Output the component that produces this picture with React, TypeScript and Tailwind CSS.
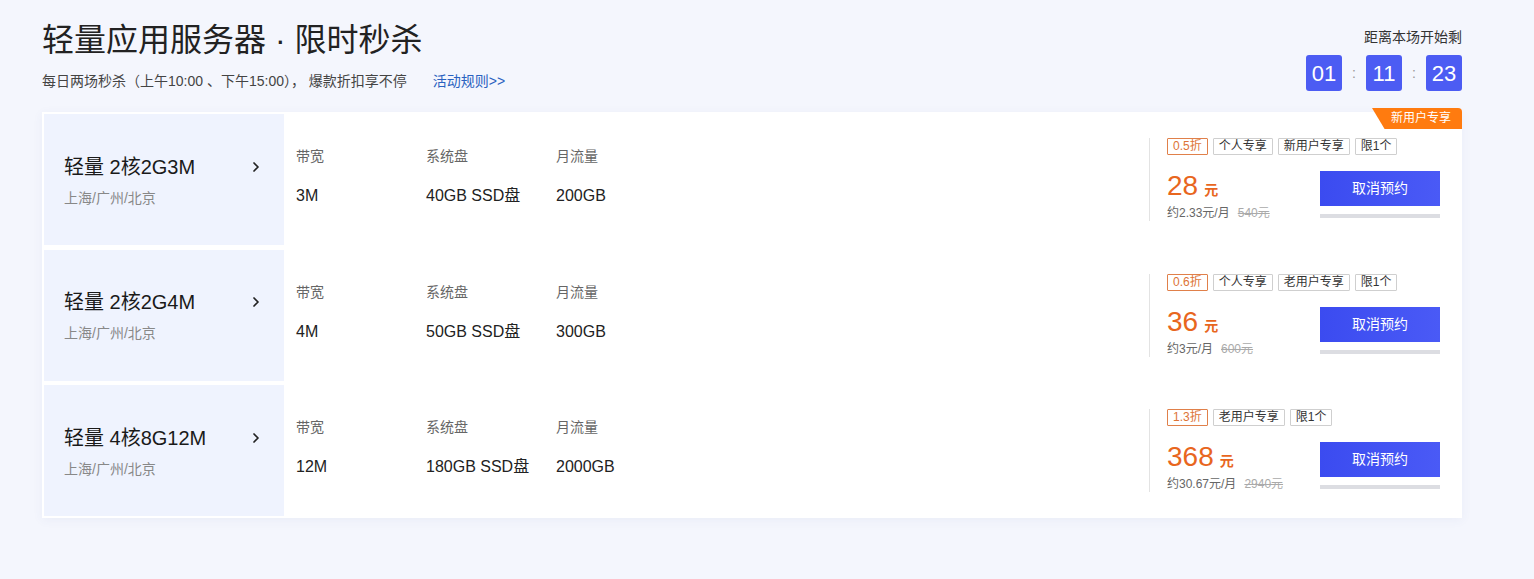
import React from 'react';
import { ChevronRight } from 'lucide-react';

type Plan = {
  name: string;
  bandwidth: string;
  disk: string;
  traffic: string;
  discount: string;
  tags: string[];
  price: string;
  monthly: string;
  original: string;
};

const plans: Plan[] = [
  { name: '轻量 2核2G3M', bandwidth: '3M', disk: '40GB SSD盘', traffic: '200GB', discount: '0.5折', tags: ['个人专享', '新用户专享', '限1个'], price: '28', monthly: '约2.33元/月', original: '540元' },
  { name: '轻量 2核2G4M', bandwidth: '4M', disk: '50GB SSD盘', traffic: '300GB', discount: '0.6折', tags: ['个人专享', '老用户专享', '限1个'], price: '36', monthly: '约3元/月', original: '600元' },
  { name: '轻量 4核8G12M', bandwidth: '12M', disk: '180GB SSD盘', traffic: '2000GB', discount: '1.3折', tags: ['老用户专享', '限1个'], price: '368', monthly: '约30.67元/月', original: '2940元' },
];

const font = { fontFamily: '"Liberation Sans", "Noto Sans CJK SC", sans-serif' };

const Countdown = () => {
  const parts = ['01', '11', '23'];
  return (
    <div className="pt-[8px] flex flex-col items-end">
      <div className="text-[14px] leading-[18px] text-[#333]">距离本场开始剩</div>
      <div className="mt-[9px] flex items-center">
        {parts.map((p, i) => (
          <React.Fragment key={i}>
            {i > 0 && <span className="w-[24px] text-center text-[14px] text-[#999]">:</span>}
            <div className="w-[36px] h-[36px] rounded-[3px] bg-[#4c5cf3] text-white text-[22px] flex items-center justify-center">{p}</div>
          </React.Fragment>
        ))}
      </div>
    </div>
  );
};

const Spec = ({ label, value }: { label: string; value: string }) => (
  <div className="w-[130px] flex flex-col">
    <div className="text-[14px] leading-[18px] text-[#666]">{label}</div>
    <div className="mt-[21px] text-[16px] leading-[20px] text-[#222]">{value}</div>
  </div>
);

const PlanRow = ({ plan }: { plan: Plan }) => (
  <div className="flex h-[131px]">
    <div className="w-[240px] shrink-0 bg-[#eff3fe] pl-[20px] pr-[20px] flex flex-col justify-center">
      <div className="flex items-center justify-between">
        <span className="text-[20px] leading-[28px] text-[#1a1a1a]">{plan.name}</span>
        <ChevronRight size={16} strokeWidth={2.6} className="text-[#222]" />
      </div>
      <div className="mt-[8px] text-[14px] leading-[18px] text-[#888]">上海/广州/北京</div>
    </div>
    <div className="flex-1 pl-[12px] pt-[33px] flex">
      <Spec label="带宽" value={plan.bandwidth} />
      <Spec label="系统盘" value={plan.disk} />
      <Spec label="月流量" value={plan.traffic} />
    </div>
    <div className="w-[311px] shrink-0 flex items-center">
      <div className="w-full border-l border-[#e3e3e3] pl-[17px] pr-[20px] flex flex-col">
        <div className="flex gap-[5px] h-[17px]">
          <span className="px-[5px] border border-[#e0804a] text-[#dd7436] text-[12px] leading-[15px] rounded-[1px]">{plan.discount}</span>
          {plan.tags.map((t) => (
            <span key={t} className="px-[5px] border border-[#cfcfcf] text-[#333] text-[12px] leading-[15px] rounded-[1px]">{t}</span>
          ))}
        </div>
        <div className="mt-[15px] flex justify-between">
          <div className="flex flex-col">
            <div className="flex items-baseline text-[#e8661e]">
              <span className="text-[28px] leading-[32px]">{plan.price}</span>
              <span className="ml-[6px] text-[14px] font-bold">元</span>
            </div>
            <div className="mt-[3px] text-[12px] leading-[16px] text-[#666]">
              {plan.monthly}
              <span className="ml-[8px] text-[#aaa] line-through">{plan.original}</span>
            </div>
          </div>
          <div className="flex flex-col pt-[1px]">
            <button className="w-[120px] h-[35px] bg-gradient-to-r from-[#3b4bf0] to-[#4a5af6] text-white text-[14px]">取消预约</button>
            <div className="mt-[8px] w-[120px] h-[4px] bg-[#dcdde2]" />
          </div>
        </div>
      </div>
    </div>
  </div>
);

export default function App() {
  return (
    <div className="min-h-screen bg-[#f4f6fd] pt-[20px] pl-[42px]" style={font}>
      <div className="w-[1420px]">
        <div className="h-[92px] flex justify-between items-start">
          <div>
            <h1 className="text-[32px] leading-[40px] text-[#222]">轻量应用服务器 · 限时秒杀</h1>
            <div className="mt-[12px] text-[14px] leading-[18px] text-[#444] flex">
              <span>每日两场秒杀（上午10:00 、下午15:00）， 爆款折扣享不停</span>
              <a className="ml-[26px] text-[#2a62c0]">活动规则&gt;&gt;</a>
            </div>
          </div>
          <Countdown />
        </div>
        <div className="relative bg-white p-[2px] flex flex-col gap-[4.5px] shadow-[0_2px_10px_rgba(60,80,160,0.06)]">
          <div
            className="absolute right-0 top-[-4px] h-[21px] w-[90px] bg-[#ff7b0f] rounded-tr-[4px] text-white text-[12px] leading-[21px] pl-[19px]"
            style={{ clipPath: 'polygon(0 0, 100% 0, 100% 100%, 14% 100%)' }}
          >
            新用户专享
          </div>
          {plans.map((p) => (
            <PlanRow key={p.name} plan={p} />
          ))}
        </div>
      </div>
    </div>
  );
}
